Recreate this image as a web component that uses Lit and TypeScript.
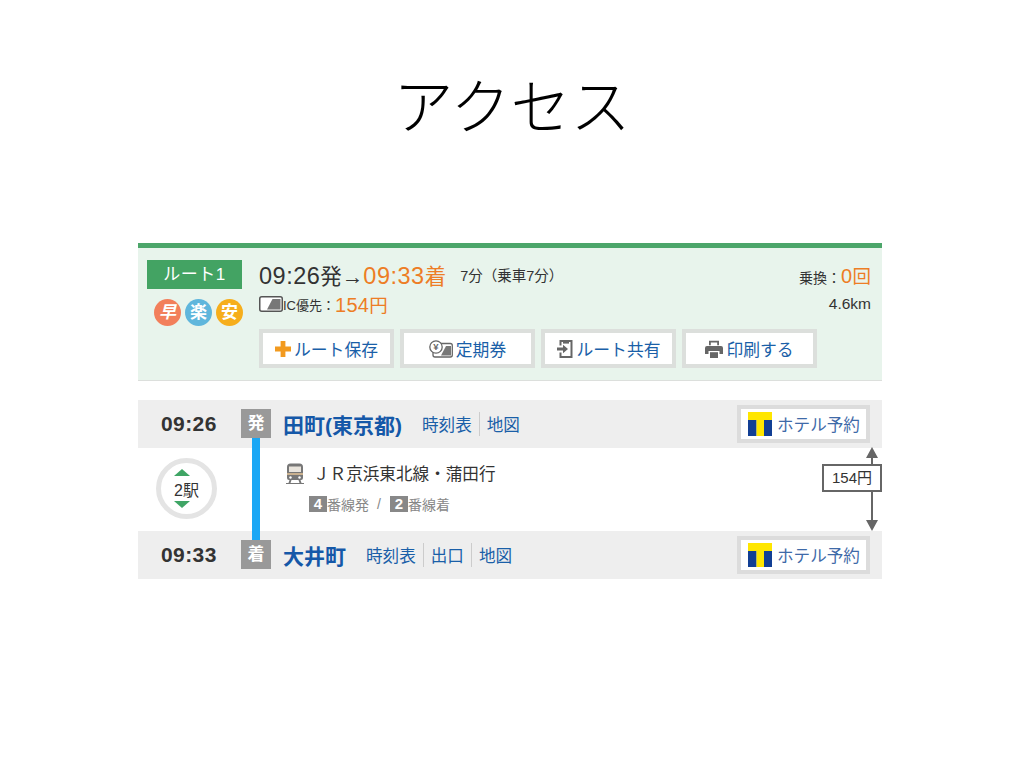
import { LitElement, html, css, svg } from 'lit';
import { customElement } from 'lit/decorators.js';

const icCard = svg`<svg class="ic" width="24" height="16" viewBox="0 0 24 16">
  <rect x="0.75" y="0.75" width="22.5" height="14.5" rx="2" fill="#fff" stroke="#555" stroke-width="1.5"/>
  <path d="M8 13.5 L13.5 3 H21.5 V13.5 Z" fill="#777"/>
</svg>`;

const plusIcon = svg`<svg width="16" height="16" viewBox="0 0 16 16">
  <path d="M5.6 0h4.8v5.6H16v4.8h-5.6V16H5.6v-5.6H0V5.6h5.6z" fill="#f29a1f"/>
</svg>`;

const passIcon = svg`<svg width="24" height="18" viewBox="0 0 24 18">
  <rect x="4" y="3.5" width="19.3" height="13.5" rx="2" fill="#fff" stroke="#666" stroke-width="1.3"/>
  <path d="M12 15.5 L17 6 H22 V15.5 Z" fill="#777"/>
  <circle cx="7" cy="7" r="6.2" fill="#fff" stroke="#666" stroke-width="1.3"/>
  <text x="7" y="10.4" text-anchor="middle" font-size="9.5" font-weight="700" fill="#666" font-family="Liberation Sans">¥</text>
</svg>`;

const shareIcon = svg`<svg width="17" height="18" viewBox="0 0 17 18">
  <path d="M3.5 5.5V1h11v16h-11v-4.5" fill="none" stroke="#666" stroke-width="2"/>
  <path d="M6 1h6v2.6H6z" fill="#666"/>
  <path d="M0 7.5h6V4.8l5 4.2-5 4.2v-2.7H0z" fill="#666"/>
</svg>`;

const printerIcon = svg`<svg width="18" height="18" viewBox="0 0 18 18">
  <path d="M4 0.8h10v4.5h-1.8V2.6H5.8v2.7H4z" fill="#666"/>
  <path d="M2 6h14a2 2 0 0 1 2 2v6h-3.5v-3h-11v3H0V8a2 2 0 0 1 2-2z" fill="#666"/>
  <path d="M5 12.2h8V18H5z" fill="#666"/>
</svg>`;

const trainIcon = svg`<svg width="18" height="21" viewBox="0 0 18 21">
  <path d="M4.5 0.5h9A3.5 3.5 0 0 1 17 4v11a2 2 0 0 1-2 2H3a2 2 0 0 1-2-2V4A3.5 3.5 0 0 1 4.5.5z" fill="#777"/>
  <rect x="3" y="3.5" width="12" height="5.5" fill="#e9e4dc"/>
  <rect x="1" y="10" width="16" height="2" fill="#c9b08e"/>
  <circle cx="4.5" cy="14.5" r="1.2" fill="#fff"/>
  <circle cx="13.5" cy="14.5" r="1.2" fill="#fff"/>
  <path d="M0 20h18v1H0zM3.5 17h2l-1 3h-2zM12.500 17h2l1 3h-2z" fill="#777"/>
</svg>`;

const tLogo = svg`<svg width="24" height="24" viewBox="0 0 24 24">
  <rect width="24" height="24" fill="#fff"/>
  <rect width="24" height="8" fill="#ffe600"/>
  <rect x="8.300" width="7.800" height="24" fill="#ffe600"/>
  <rect y="8" width="8.300" height="16" fill="#123f94"/>
  <rect x="16" y="8" width="8" height="16" fill="#123f94"/>
</svg>`;

@customElement('app-root')
export class AppRoot extends LitElement {
  static styles = css`
    :host {
      display: block;
      width: 1024px;
      height: 768px;
      background: #fff;
      overflow: hidden;
      font-family: 'Liberation Sans', 'Noto Sans CJK JP', sans-serif;
      color: #333;
    }
    h1 {
      margin: 0;
      height: 243px;
      padding-top: 59px;
      box-sizing: border-box;
      text-align: center;
      font-size: 60px;
      line-height: 88px;
      font-weight: 300;
      color: #000;
      font-family: 'Noto Sans CJK JP', sans-serif;
    }
    .content {
      width: 744px;
      margin-left: 138px;
    }

    /* route summary */
    .summary {
      display: flex;
      height: 138px;
      box-sizing: border-box;
      padding-top: 12px;
      background: #e8f4ec;
      border-top: 5px solid #4ca66a;
      border-bottom: 1px solid #dcdfdc;
    }
    .side {
      width: 95px;
      margin: 0 17px 0 9px;
    }
    .route-label {
      height: 29px;
      line-height: 29px;
      text-align: center;
      background: #43a363;
      color: #fff;
      font-size: 17px;
      letter-spacing: 0.5px;
    }
    .badges {
      display: flex;
      justify-content: flex-end;
      gap: 4px;
      margin: 10px -1px 0 0;
    }
    .badge {
      width: 27px;
      height: 27px;
      border-radius: 50%;
      line-height: 27px;
      text-align: center;
      color: #fff;
      font-size: 17px;
      font-weight: 700;
    }
    .b1 { background: #f27f5b; font-style: italic; }
    .b2 { background: #5fb6dc; }
    .b3 { background: #f6ae1c; }
    .main {
      flex: 1;
      padding-right: 11px;
    }
    .line {
      display: flex;
      align-items: center;
      justify-content: space-between;
    }
    .line1 { height: 29px; }
    .line2 { height: 30px; }
    .left {
      display: flex;
      align-items: center;
    }
    .times {
      font-size: 21.500px;
      color: #333;
    }
    .times b {
      font-weight: 400;
      font-size: 23.500px;
      letter-spacing: 0.5px;
    }
    .times .em { color: #ed7d25; }
    .duration {
      margin-left: 14px;
      font-size: 14.500px;
    }
    .transfer { font-size: 14px; }
    .orange {
      color: #ed7d25;
      font-size: 18.500px;
    }
    .orange b {
      font-weight: 400;
      font-size: 20px;
      letter-spacing: 0.3px;
    }
    .ic { margin-right: 0; }
    .ic-label { font-size: 13px; }
    .distance { font-size: 15.500px; }
    .actions {
      display: flex;
      gap: 6px;
      margin-top: 10px;
    }
    .btn {
      display: flex;
      align-items: center;
      justify-content: center;
      gap: 3px;
      width: 135px;
      height: 39px;
      box-sizing: border-box;
      background: #fff;
      border: 4px solid #dcdfdc;
      color: #1a5fa8;
      font-size: 16.800px;
    }

    /* itinerary */
    .trip {
      position: relative;
      margin-top: 19px;
    }
    .stop {
      display: flex;
      align-items: center;
      height: 48px;
      padding-bottom: 1px;
      box-sizing: border-box;
      background: #eeeeee;
    }
    .time {
      width: 103px;
      padding-left: 23px;
      box-sizing: border-box;
      font-size: 21px;
      font-weight: 700;
      color: #333;
      letter-spacing: 0.4px;
    }
    .tag {
      position: relative;
      z-index: 1;
      width: 30px;
      height: 29px;
      line-height: 29px;
      text-align: center;
      background: #999;
      color: #fff;
      font-size: 17px;
      font-weight: 700;
    }
    .name {
      margin: 0 20px 0 12px;
      font-size: 21px;
      font-weight: 700;
      color: #1558a8;
    }
    .links {
      display: flex;
      flex: 1;
      font-size: 16.600px;
      color: #1a5fa8;
    }
    .links span + span {
      margin-left: 7px;
      padding-left: 7px;
      border-left: 1px solid #ccc;
    }
    .hotel {
      display: flex;
      align-items: center;
      gap: 5px;
      width: 133px;
      height: 38px;
      margin-right: 12px;
      padding-left: 7px;
      box-sizing: border-box;
      background: #fff;
      border: 4px solid #dcdcdc;
      color: #3f6aa8;
      font-size: 16.600px;
    }
    .ride {
      display: flex;
      height: 83px;
      padding-top: 10px;
      box-sizing: border-box;
    }
    .count {
      position: relative;
      display: flex;
      align-items: center;
      justify-content: center;
      flex: none;
      width: 61px;
      height: 61px;
      margin: 0 69px 0 18px;
      box-sizing: border-box;
      border: 5px solid #e4e4e4;
      border-radius: 50%;
      font-size: 16px;
    }
    .tri {
      position: absolute;
      left: 13px;
      width: 0;
      height: 0;
      border-left: 8px solid transparent;
      border-right: 8px solid transparent;
    }
    .tri.up { top: 6px; border-bottom: 7px solid #3fa565; }
    .tri.down { bottom: 6px; border-top: 7px solid #3fa565; }
    .detail { padding-top: 3px; }
    .train {
      display: flex;
      align-items: center;
      gap: 9px;
      font-size: 16.600px;
      color: #333;
    }
    .platform {
      display: flex;
      align-items: center;
      margin: 9px 0 0 23px;
      font-size: 14px;
      color: #888;
    }
    .num {
      width: 18px;
      height: 16px;
      line-height: 16px;
      text-align: center;
      background: #888;
      color: #fff;
      font-size: 15px;
      font-weight: 700;
    }
    .slash { margin: 0 9px 0 8px; }

    /* lies over the rows */
    .rail {
      position: absolute;
      left: 114px;
      top: 38px;
      width: 8px;
      height: 102px;
      background: #1aa7f5;
    }
    .fare-line {
      position: absolute;
      left: 727px;
      top: 47px;
      width: 14px;
      height: 84px;
    }
    .fare {
      position: absolute;
      left: 684px;
      top: 64px;
      width: 60px;
      height: 28px;
      line-height: 24px;
      box-sizing: border-box;
      text-align: center;
      background: #fff;
      border: 2px solid #666;
      font-size: 15px;
      color: #333;
    }
  `;

  private hotel() {
    return html`<div class="hotel">${tLogo}<span>ホテル予約</span></div>`;
  }

  render() {
    return html`
      <h1>アクセス</h1>
      <div class="content">
        <section class="summary">
          <div class="side">
            <div class="route-label">ルート1</div>
            <div class="badges">
              <div class="badge b1">早</div>
              <div class="badge b2">楽</div>
              <div class="badge b3">安</div>
            </div>
          </div>
          <div class="main">
            <div class="line line1">
              <div class="left">
                <span class="times"><b>09:26</b>発→<span class="em"><b>09:33</b>着</span></span>
                <span class="duration">7分（乗車7分）</span>
              </div>
              <div class="transfer">乗換：<span class="orange"><b>0</b>回</span></div>
            </div>
            <div class="line line2">
              <div class="left">
                ${icCard}<span class="ic-label">IC優先：</span>
                <span class="orange"><b>154</b>円</span>
              </div>
              <div class="distance">4.6km</div>
            </div>
            <div class="actions">
              <div class="btn">${plusIcon}<span>ルート保存</span></div>
              <div class="btn">${passIcon}<span>定期券</span></div>
              <div class="btn">${shareIcon}<span>ルート共有</span></div>
              <div class="btn">${printerIcon}<span>印刷する</span></div>
            </div>
          </div>
        </section>

        <section class="trip">
          <div class="stop">
            <div class="time">09:26</div>
            <div class="tag">発</div>
            <div class="name">田町(東京都)</div>
            <div class="links"><span>時刻表</span><span>地図</span></div>
            ${this.hotel()}
          </div>
          <div class="ride">
            <div class="count">
              <i class="tri up"></i>2駅<i class="tri down"></i>
            </div>
            <div class="detail">
              <div class="train">${trainIcon}<span>ＪＲ京浜東北線・蒲田行</span></div>
              <div class="platform">
                <span class="num">4</span>番線発<span class="slash">/</span><span class="num">2</span>番線着
              </div>
            </div>
          </div>
          <div class="stop">
            <div class="time">09:33</div>
            <div class="tag">着</div>
            <div class="name">大井町</div>
            <div class="links"><span>時刻表</span><span>出口</span><span>地図</span></div>
            ${this.hotel()}
          </div>
          <div class="rail"></div>
          <svg class="fare-line" viewBox="0 0 14 84">
            <path d="M6 10h2v64H6z" fill="#666"/>
            <path d="M7 0l6 11H1zM7 84l-6-11h12z" fill="#666"/>
          </svg>
          <div class="fare">154円</div>
        </section>
      </div>
    `;
  }
}
